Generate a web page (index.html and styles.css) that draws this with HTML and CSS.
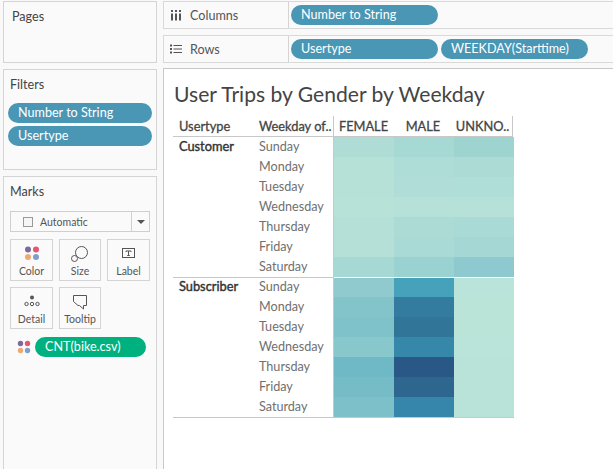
FILE: index.html
```html
<!DOCTYPE html>
<html lang="en">
<head>
<meta charset="utf-8">
<title>User Trips by Gender by Weekday</title>
<link rel="stylesheet" href="styles.css">
</head>
<body>
<div class="app">
  <aside class="sidebar">
    <section class="card pages"><h2 class="card-title">Pages</h2></section>
    <section class="card filters">
      <h2 class="card-title">Filters</h2>
      <div class="pill pill-wide">Number to String</div>
      <div class="pill pill-wide">Usertype</div>
    </section>
    <section class="card marks">
      <h2 class="card-title">Marks</h2>
      <div class="mark-select">
        <span class="mark-select-main"><span class="checkbox"></span>Automatic</span>
        <span class="mark-select-arrow"><span class="caret"></span></span>
      </div>
      <div class="mark-buttons">
        <div class="mark-btn">
          <svg class="mark-icon" width="20" height="16" viewBox="0 0 20 16"><circle cx="6" cy="3.500" r="3" fill="#7b6a9c"/><circle cx="14" cy="3.500" r="3" fill="#e8566e"/><circle cx="6" cy="11" r="3" fill="#f1a76f"/><circle cx="14" cy="11" r="3" fill="#7f9fc9"/></svg>
          <span>Color</span>
        </div>
        <div class="mark-btn">
          <svg class="mark-icon" width="20" height="16" viewBox="0 0 20 16" fill="#fafafa" stroke="#555" stroke-width="1"><circle cx="11.500" cy="6.500" r="6"/><circle cx="4.500" cy="12.500" r="3"/></svg>
          <span>Size</span>
        </div>
        <div class="mark-btn">
          <svg class="mark-icon" width="20" height="16" viewBox="0 0 20 16" fill="none" stroke="#555"><rect x="3.500" y="2.500" width="12" height="9"/><path d="M7 5h5M9.500 5v4.500M8.200 9.500h2.600M7 5v1M12 5v1"/></svg>
          <span>Label</span>
        </div>
        <div class="mark-btn">
          <svg class="mark-icon" width="20" height="16" viewBox="0 0 20 16" fill="none" stroke="#555"><circle cx="10" cy="3.500" r="2" fill="#555" stroke="none"/><circle cx="4.500" cy="10" r="1.700"/><circle cx="10" cy="10" r="1.700"/><circle cx="15.500" cy="10" r="1.700"/></svg>
          <span>Detail</span>
        </div>
        <div class="mark-btn">
          <svg class="mark-icon" width="20" height="16" viewBox="0 0 20 16" fill="none" stroke="#555"><path d="M3.500 1.500h13v10h-3v3.500l-4-3.500-1.500 0-4.500-4z"/></svg>
          <span>Tooltip</span>
        </div>
      </div>
      <div class="mark-field">
        <svg width="14" height="14" viewBox="0 0 14 14"><circle cx="3.500" cy="3.500" r="2.700" fill="#7b6a9c"/><circle cx="10.500" cy="3.500" r="2.700" fill="#e8566e"/><circle cx="3.500" cy="10.500" r="2.700" fill="#f1a76f"/><circle cx="10.500" cy="10.500" r="2.700" fill="#7f9fc9"/></svg>
        <div class="pill pill-green">CNT(bike.csv)</div>
      </div>
    </section>
  </aside>
  <main class="content">
    <div class="shelf">
      <div class="shelf-label">
        <svg width="12" height="12" viewBox="0 0 12 12" fill="#555"><rect x="1" y="1" width="2" height="2"/><rect x="1" y="4.500" width="2" height="7"/><rect x="5" y="1" width="2" height="2"/><rect x="5" y="4.500" width="2" height="7"/><rect x="9" y="1" width="2" height="2"/><rect x="9" y="4.500" width="2" height="7"/></svg>
        Columns
      </div>
      <div class="pill pill-shelf">Number to String</div>
    </div>
    <div class="shelf">
      <div class="shelf-label">
        <svg width="12" height="12" viewBox="0 0 12 12" fill="#555"><rect x="0" y="1.500" width="2" height="2"/><rect x="3.500" y="2" width="8.500" height="1"/><rect x="0" y="5" width="2" height="2"/><rect x="3.500" y="5.500" width="8.500" height="1"/><rect x="0" y="8.500" width="2" height="2"/><rect x="3.500" y="9" width="8.500" height="1"/></svg>
        Rows
      </div>
      <div class="pill pill-shelf">Usertype</div>
      <div class="pill pill-shelf">WEEKDAY(Starttime)</div>
    </div>
    <section class="view">
      <h1 class="view-title">User Trips by Gender by Weekday</h1>
      <div class="crosstab">
        <div class="head head-left">Usertype</div>
        <div class="head head-left">Weekday of..</div>
        <div class="head head-col">FEMALE</div>
        <div class="head head-col">MALE</div>
        <div class="head head-col">UNKNO..</div>

        <div class="group">Customer</div>
        <div class="day">Sunday</div><div class="cell" style="background:#b0dcd6"></div><div class="cell" style="background:#a6d9d4"></div><div class="cell" style="background:#9dd4d0"></div>
        <div class="day">Monday</div><div class="cell" style="background:#b6e1d7"></div><div class="cell" style="background:#aeddd7"></div><div class="cell" style="background:#acdbd6"></div>
        <div class="day">Tuesday</div><div class="cell" style="background:#b6e1d7"></div><div class="cell" style="background:#b0ddd7"></div><div class="cell" style="background:#afddd8"></div>
        <div class="day">Wednesday</div><div class="cell" style="background:#b7e2d8"></div><div class="cell" style="background:#b5e1d8"></div><div class="cell" style="background:#b5e1d8"></div>
        <div class="day">Thursday</div><div class="cell" style="background:#b5e0d7"></div><div class="cell" style="background:#acdbd6"></div><div class="cell" style="background:#a9dad5"></div>
        <div class="day">Friday</div><div class="cell" style="background:#b5e0d7"></div><div class="cell" style="background:#a9dad5"></div><div class="cell" style="background:#a5d8d4"></div>
        <div class="day">Saturday</div><div class="cell" style="background:#a6d9d4"></div><div class="cell" style="background:#9ad2d1"></div><div class="cell" style="background:#8dc9ce"></div>

        <div class="group group-second">Subscriber</div>
        <div class="day day-first">Sunday</div><div class="cell cell-first" style="background:#90cace"></div><div class="cell cell-first" style="background:#46a2ba"></div><div class="cell cell-first" style="background:#bae4d9"></div>
        <div class="day">Monday</div><div class="cell" style="background:#83c4cb"></div><div class="cell" style="background:#337ca0"></div><div class="cell" style="background:#bbe4d9"></div>
        <div class="day">Tuesday</div><div class="cell" style="background:#7fc2ca"></div><div class="cell" style="background:#317599"></div><div class="cell" style="background:#bbe4d9"></div>
        <div class="day">Wednesday</div><div class="cell" style="background:#88c7cc"></div><div class="cell" style="background:#3588a9"></div><div class="cell" style="background:#bae4d9"></div>
        <div class="day">Thursday</div><div class="cell" style="background:#6fb8c6"></div><div class="cell" style="background:#2a5886"></div><div class="cell" style="background:#b9e3d8"></div>
        <div class="day">Friday</div><div class="cell" style="background:#76bcc7"></div><div class="cell" style="background:#2d668e"></div><div class="cell" style="background:#b9e3d8"></div>
        <div class="day">Saturday</div><div class="cell" style="background:#7dc0c9"></div><div class="cell" style="background:#3685ab"></div><div class="cell" style="background:#b9e3d8"></div>
      </div>
    </section>
  </main>
</div>
</body>
</html>
```

FILE: styles.css
```css
* { box-sizing: border-box; }
html, body { margin: 0; height: 100%; overflow: hidden; }
body { background: #f9f9f9; font-family: Lato, sans-serif; font-size: 12.600px; color: #444; }
.app { display: flex; height: 469px; width: 613px; }
.sidebar { width: 163px; flex: none; padding: 1px 6px 0 3px; display: flex; flex-direction: column; gap: 6px; }
.card { border: 1px solid #d4d4d4; background: #fafafa; padding: 6px 6px 0 2px; }
.card-title { margin: 0 0 0 6px; font-size: 12.600px; font-weight: 400; line-height: 17px; color: #444; }
.pages { height: 62px; }
.filters { height: 101px; display: flex; flex-direction: column; gap: 3px; padding: 6px 4px 0; }
.filters .card-title { margin: 0 0 7px 2px; }
.marks { flex: 1; margin-bottom: -2px; padding: 6px 6px 0 6px; border-bottom: none; }
.marks .card-title { margin: 0; }
.pill { height: 20px; border-radius: 10px; background: #4a96b5; color: #fff; padding: 0 10px; line-height: 20px; white-space: nowrap; }
.pill-wide { width: 144px; }
.mark-select { display: flex; height: 21px; margin-top: 11px; width: 140px; border: 1px solid #cfcfcf; background: #fafafa; font-size: 10.500px; }
.mark-select-main { flex: 1; display: flex; align-items: center; padding-left: 12px; gap: 6px; color: #555; }
.checkbox { width: 10px; height: 10px; border: 1px solid #9a9a9a; background: #f6f6f6; margin-right: 1px; }
.mark-select-arrow { width: 18px; border-left: 1px solid #cfcfcf; display: flex; align-items: center; justify-content: center; }
.caret { border: 4px solid transparent; border-top: 4px solid #555; border-bottom: none; }
.mark-buttons { display: grid; grid-template-columns: 43px 42px 43px; column-gap: 6px; row-gap: 6px; margin-top: 7px; width: 140px; }
.mark-btn { height: 42px; border: 1px solid #d4d4d4; display: flex; flex-direction: column; align-items: center; padding-top: 6px; font-size: 10.500px; color: #555; line-height: 14px; }
.mark-icon { margin-bottom: 2px; flex: none; }
.mark-field { display: flex; align-items: center; gap: 4px; margin-top: 8px; padding-left: 7px; }
.pill-green { background: #00b180; width: 111px; height: 20px; }
.content { flex: 1; display: flex; flex-direction: column; min-width: 0; }
.shelf { height: 28px; flex: none; margin-top: 1px; margin-bottom: 5px; display: flex; align-items: center; border: 1px solid #d9d9d9; border-right: none; background: #fafafa; gap: 3px; }
.shelf-label { width: 125px; height: 100%; flex: none; border-right: 1px solid #d4d4d4; display: flex; align-items: center; gap: 8px; padding-left: 6px; margin-right: -1px; color: #555; }
.pill-shelf { width: 147px; }
.view { flex: 1; border: 1px solid #c8c8c8; border-right: none; border-bottom: none; background: #fff; padding: 11px 0 0 9px; }
.view-title { margin: 0 0 8px 1px; font-size: 21.100px; font-weight: 400; line-height: 28px; color: #444; }
.crosstab { display: grid; grid-template-columns: 80px 80px 60px 60px 60px; grid-template-rows: 21px repeat(14, 20px); width: 341px; border-bottom: 1px solid #c8c8c8; }
.head { font-weight: 400; color: #444; font-size: 12.800px; -webkit-text-stroke: 0.3px #444; line-height: 17px; padding-top: 2px; border-bottom: 1px solid #c8c8c8; white-space: nowrap; }
.head-left { padding-left: 6px; }
.head-col { text-align: center; }
.head:nth-child(3) { border-left: 1px solid #c8c8c8; }
.head:nth-child(5) { border-right: 1px solid #c8c8c8; }
.group { grid-row: span 7; grid-column: 1; font-weight: 400; -webkit-text-stroke: 0.4px #333; color: #333; font-size: 12.800px; padding-left: 6px; line-height: 18px; }
.group-second { border-top: 1px solid #c8c8c8; line-height: 17px; }
.day { grid-column: 2; padding-left: 6px; line-height: 20px; color: #707070; border-right: 1px solid #c8c8c8; width: 81px; }
.day-first { border-top: 1px solid #c8c8c8; line-height: 18px; }
.cell { height: 20px; margin-left: 1px; margin-right: -1px; }
.cell-first { border-top: 1px solid #fff; }
```
